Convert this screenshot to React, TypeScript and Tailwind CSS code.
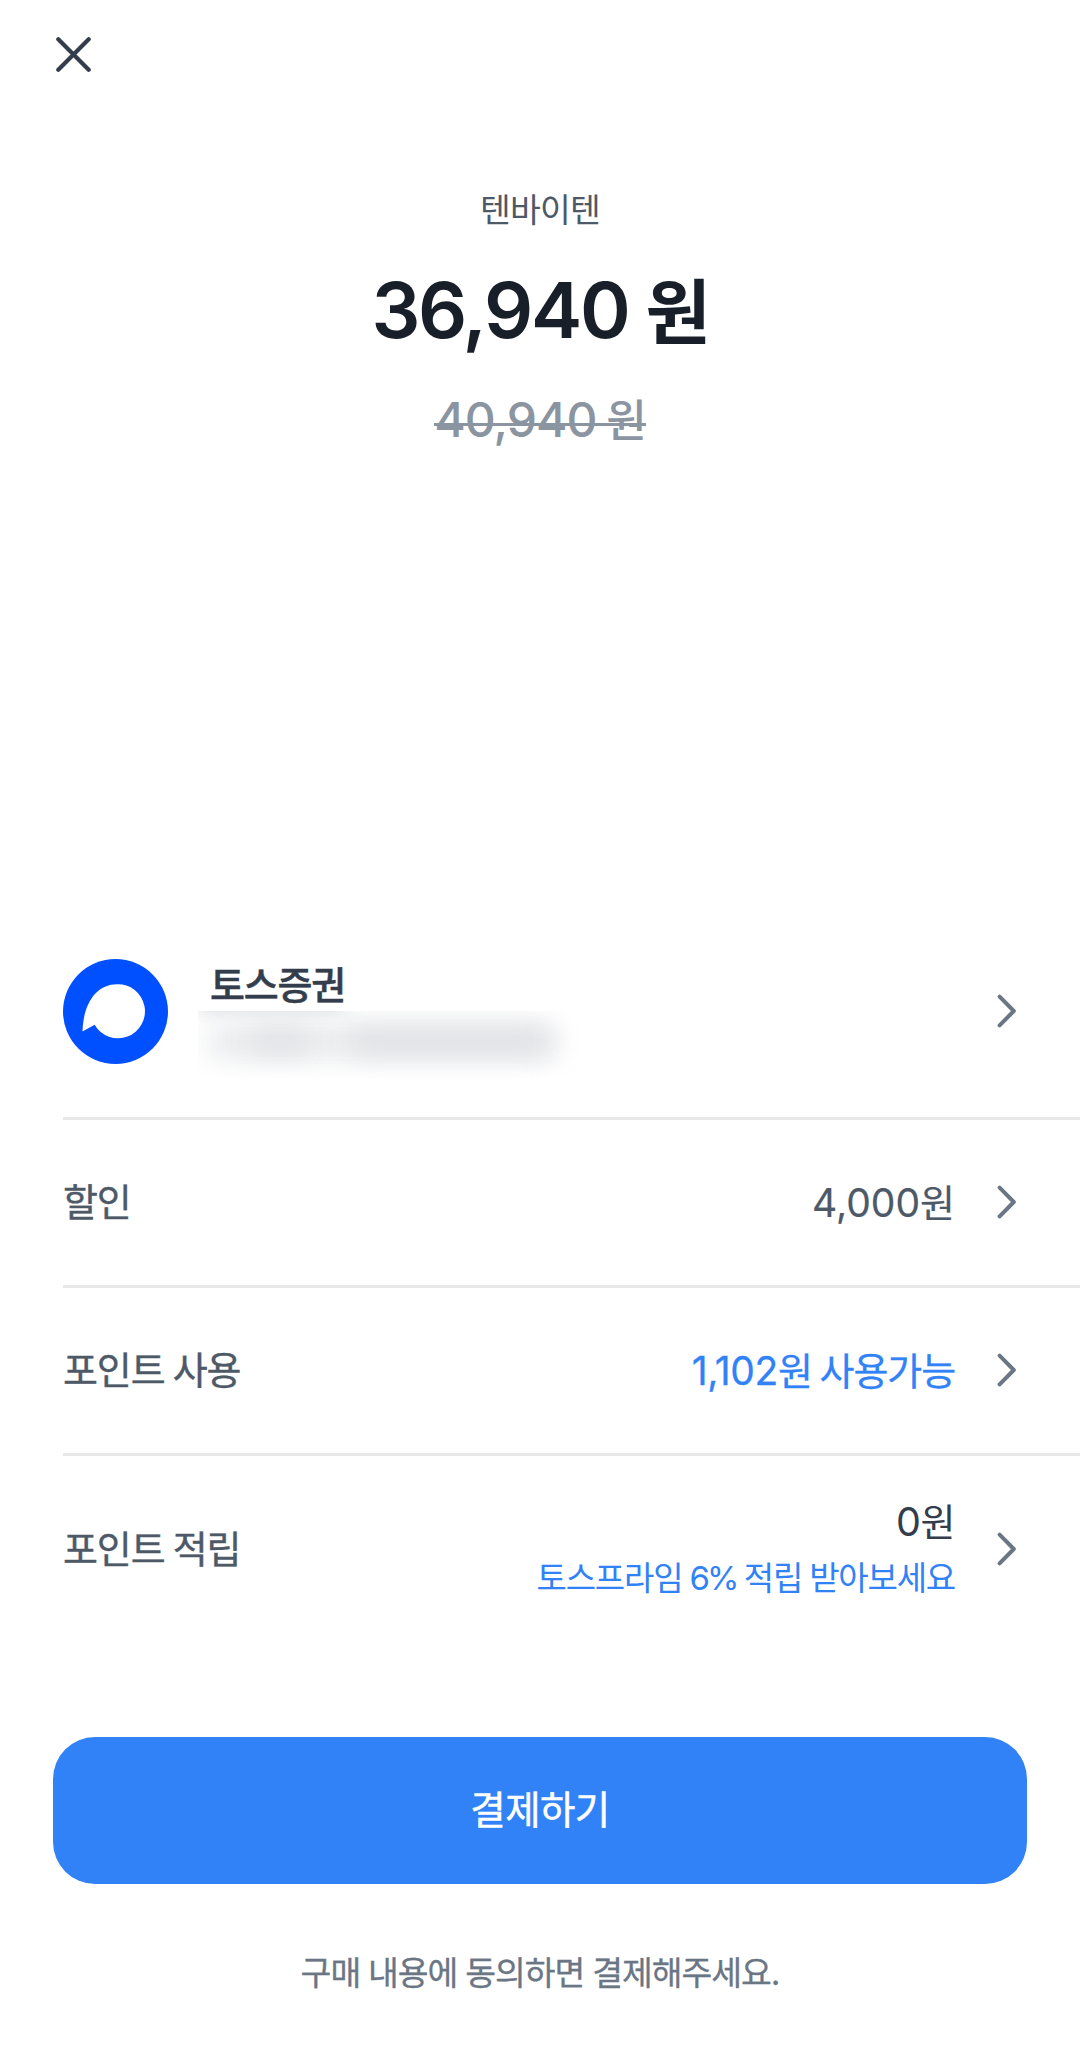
import React from 'react';
import { clsx } from 'clsx';

const CloseIcon = () => (
  <svg width="36" height="36" viewBox="0 0 36 36" fill="none" stroke="#333d4b" strokeWidth="4.2" strokeLinecap="round">
    <path d="M2.3 2.3L32.7 32.7M32.7 2.3L2.3 32.7" />
  </svg>
);

const ChevronIcon = () => (
  <svg className="mb-[2px] ml-[43px] shrink-0" width="20" height="34" viewBox="0 0 20 34" fill="none" stroke="#6b7684" strokeWidth="4" strokeLinecap="round" strokeLinejoin="round">
    <path d="M2.6 2.6L16.8 17L2.6 31.4" />
  </svg>
);

const TossLogo = () => (
  <svg className="shrink-0" width="105" height="105" viewBox="0 0 105 105">
    <circle cx="52.5" cy="52.5" r="52.5" fill="#0050ff" />
    <path d="M19.5 72.5C20.3 45 33 25.3 54 25.3A27 27 0 1 1 31.6 65.8Z" fill="#fff" />
  </svg>
);

interface RowProps {
  label: string;
  last?: boolean;
  children: React.ReactNode;
}

const Row: React.FC<RowProps> = ({ label, last, children }) => (
  <button
    className={clsx(
      'flex w-full items-center pr-[63px] text-left',
      last ? 'h-[186px] pt-[1px]' : 'h-[168px] border-b-[3px] border-[#e8e8e8]'
    )}
  >
    <span className="text-[38px] tracking-[-1.1px] text-[#4e5968] [word-spacing:-1.5px] [-webkit-text-stroke:0.4px]">{label}</span>
    <div className="ml-auto flex flex-col items-end">{children}</div>
    <ChevronIcon />
  </button>
);

export default function App() {
  return (
    <div className="flex h-[2046px] w-[1080px] flex-col overflow-hidden bg-white font-['Inter','Noto_Sans_CJK_KR',sans-serif]">
      <header className="flex h-[109px] items-center pl-[56px]">
        <button aria-label="닫기">
          <CloseIcon />
        </button>
      </header>

      {/* Amount */}
      <section className="flex h-[797px] flex-col items-center pt-[76px]">
        <p className="text-[33.5px] leading-[50px] tracking-[-0.8px] text-[#4e5968]">텐바이텐</p>
        <p className="mt-[25px] text-[77px] leading-[100px] font-semibold tracking-[-2.3px] text-[#191f28]">
          36,940 <span className="text-[71px]">원</span>
        </p>
        <p className="relative mt-[28px] text-[48px] leading-[60px] font-medium tracking-[-1px] text-[#8b95a1] [word-spacing:-2px]">
          40,940 <span className="text-[44px]">원</span>
          <span className="absolute inset-x-0 top-[33px] h-[3px] bg-[#8b95a1]" />
        </p>
      </section>

      {/* Payment details */}
      <section className="pl-[63px]">
        <button className="flex h-[214px] w-full items-center border-b-[3px] border-[#e8e8e8] pr-[63px] text-left">
          <TossLogo />
          <div className="ml-[30px] flex h-[132px] flex-col">
            <span className="h-[65px] pt-[13px] pl-[12px] text-[38px] leading-[52px] font-medium tracking-[-1.2px] text-[#333d4b] [-webkit-text-stroke:0.5px]">토스증권</span>
            {/* Masked account number */}
            <div className="relative h-[67px] w-[380px] overflow-hidden">
              <div className="absolute -top-[12px] left-[2px] h-[12px] w-[145px] bg-[#333d4b]/25 blur-[9px]" />
              <div className="absolute top-[14px] left-[10px] h-[34px] w-[348px] bg-[#ebecee] blur-[13px]" />
              <div className="absolute top-[20px] left-[52px] h-[20px] w-[60px] bg-[#dcdee3] blur-[14px]" />
              <div className="absolute top-[20px] left-[152px] h-[20px] w-[198px] bg-[#dadce1] blur-[14px]" />
            </div>
          </div>
          <div className="ml-auto">
            <ChevronIcon />
          </div>
        </button>

        <Row label="할인">
          <span className="mr-[-1px] pt-[1px] text-[39px] text-[#4e5968] [-webkit-text-stroke:0.2px]">
            4,000<span className="text-[38px]">원</span>
          </span>
        </Row>
        <Row label="포인트 사용">
          <span className="mr-[-1px] pt-[1px] text-[39px] tracking-[-0.3px] text-[#3182f6] [word-spacing:-2px] [-webkit-text-stroke:0.3px]">
            1,102<span className="text-[38px] tracking-[-1.1px]">원 사용가능</span>
          </span>
        </Row>
        <Row label="포인트 적립" last>
          <span className="mr-[-1px] pt-[1px] text-[39.5px] leading-[56px] tracking-[-0.5px] text-[#333d4b]">
            0<span className="text-[38px]">원</span>
          </span>
          <span className="mr-[-1px] text-[33px] leading-[56px] tracking-[-1.2px] text-[#3182f6] [word-spacing:-1px]">
            토스프라임 <span className="tracking-[-2.8px]">6%</span> 적립 받아보세요
          </span>
        </Row>
      </section>

      <footer className="flex flex-col items-center px-[53px] pt-[95px]">
        <button className="h-[147px] w-full rounded-[42px] bg-[#3182f6] pt-[1px] text-[38.5px] tracking-[-0.6px] text-white [-webkit-text-stroke:0.5px]">결제하기</button>
        <p className="mt-[64px] text-[33.5px] leading-[50px] tracking-[-1.05px] text-[#6b7684] [word-spacing:-0.5px] [-webkit-text-stroke:0.3px]">구매 내용에 동의하면 결제해주세요.</p>
      </footer>
    </div>
  );
}
